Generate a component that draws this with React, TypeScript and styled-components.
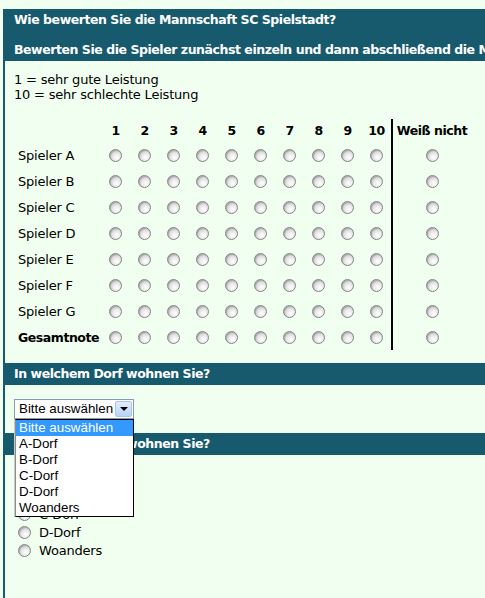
import React from "react";
import styled, { createGlobalStyle, css } from "styled-components";

const TEAL = "#175a6e";
const BG = "#f0fff0";

const boldText = css`
  font-weight: bold;
  font-size: 12.5px;
  letter-spacing: -0.45px;
`;

const GlobalStyle = createGlobalStyle`
  html, body {
    margin: 0;
    padding: 0;
    background: ${BG};
    overflow: hidden;
  }
  body {
    font-family: "DejaVu Sans", Verdana, sans-serif;
    font-size: 13px;
    letter-spacing: -0.2px;
    color: #000;
  }
`;

const Page = styled.div`
  margin: 9px 0 0 3px;
  border-left: 2px solid ${TEAL};
  width: 640px;
  min-height: 589px;
`;

const SectionHeader = styled.div`
  background: ${TEAL};
  color: #fff;
  ${boldText};
  line-height: 16px;
  padding: 3px 9px;
  white-space: nowrap;
`;

const SubLine = styled.div`
  margin-top: 14px;
`;

const Legend = styled.div`
  margin: 11px 0 0 9px;
  line-height: 15px;
`;

const Grid = styled.div`
  margin: 17px 0 0 9px;
  display: grid;
  grid-template-columns: 87px repeat(10, 29px) 80px;
  grid-auto-rows: 26px;
  grid-template-rows: 23px;
  width: max-content;
`;

const HeadCell = styled.div<{ $sep?: boolean }>`
  ${boldText};
  display: flex;
  align-items: center;
  justify-content: center;
  white-space: nowrap;
  ${(p) => (p.$sep ? "border-left: 2px solid #000;" : "")}
`;

const LabelCell = styled.div<{ $bold?: boolean }>`
  display: flex;
  align-items: center;
  padding-left: 4px;
  white-space: nowrap;
  ${(p) => (p.$bold ? boldText : "")}
`;

const RadioCell = styled.div<{ $sep?: boolean }>`
  display: flex;
  align-items: center;
  justify-content: center;
  ${(p) => (p.$sep ? "border-left: 2px solid #000;" : "")}
`;

const Radio = styled.span`
  display: inline-block;
  flex: none;
  box-sizing: border-box;
  width: 13px;
  height: 13px;
  border-radius: 50%;
  border: 1px solid #858585;
  background: radial-gradient(circle at 62% 68%, #ffffff 0%, #efefef 30%, #bdbdbd 92%);
  box-shadow: inset 1px 1px 1px rgba(0, 0, 0, 0.18);
`;

const SelectArea = styled.div`
  position: relative;
  margin: 14px 0 0 9px;
  width: 120px;
  height: 20px;
`;

const SelectBox = styled.div`
  box-sizing: border-box;
  width: 120px;
  height: 20px;
  border: 1px solid #7f9db9;
  background: #fff;
  display: flex;
  align-items: stretch;
  font-family: "Liberation Sans", Arial, sans-serif;
  font-size: 13.33px;
  letter-spacing: 0;
`;

const SelectText = styled.div`
  flex: 1;
  padding-left: 4px;
  line-height: 18px;
  white-space: nowrap;
  overflow: hidden;
`;

const SelectButton = styled.div`
  width: 17px;
  margin: 1px 1px 1px 0;
  box-sizing: border-box;
  border: 1px solid #aac6ec;
  border-radius: 2px;
  background: linear-gradient(#e3eefc, #b9d3f7);
  display: flex;
  align-items: center;
  justify-content: center;
`;

const Arrow = styled.span`
  width: 0;
  height: 0;
  border-left: 4px solid transparent;
  border-right: 4px solid transparent;
  border-top: 4px solid #000;
`;

const DropList = styled.div`
  position: absolute;
  top: 20px;
  left: 1px;
  width: 119px;
  box-sizing: border-box;
  border: 1px solid #000;
  border-left: 1px solid #8c8c8c;
  background: #fff;
  z-index: 5;
  font-family: "Liberation Sans", Arial, sans-serif;
  font-size: 13.33px;
  letter-spacing: 0;
  box-shadow: -1px 0 0 #c8c8c8;
`;

const Option = styled.div<{ $active?: boolean }>`
  height: 16px;
  line-height: 16px;
  padding-left: 3px;
  white-space: nowrap;
  background: ${(p) => (p.$active ? "#3399ff" : "#fff")};
  color: ${(p) => (p.$active ? "#fff" : "#000")};
`;

const Section = styled.div`
  margin-top: 13px;
`;

const Section3 = styled.div`
  margin-top: 14px;
`;

const RadioList = styled.div`
  margin: 14px 0 0 13px;
  display: flex;
  flex-direction: column;
`;

const RadioRow = styled.label`
  display: flex;
  align-items: center;
  gap: 8px;
  height: 18px;
  white-space: nowrap;
`;

const players = ["Spieler A", "Spieler B", "Spieler C", "Spieler D", "Spieler E", "Spieler F", "Spieler G"];
const nums = [1, 2, 3, 4, 5, 6, 7, 8, 9, 10];
const villages = ["A-Dorf", "B-Dorf", "C-Dorf", "D-Dorf", "Woanders"];

export default function App() {
  const rows = [...players.map((p) => ({ label: p, bold: false })), { label: "Gesamtnote", bold: true }];
  return (
    <>
      <GlobalStyle />
      <Page>
        <SectionHeader>
          <div>Wie bewerten Sie die Mannschaft SC Spielstadt?</div>
          <SubLine>Bewerten Sie die Spieler zunächst einzeln und dann abschließend die Mannschaft insgesamt.</SubLine>
        </SectionHeader>
        <Legend>
          <div>1 = sehr gute Leistung</div>
          <div>10 = sehr schlechte Leistung</div>
        </Legend>
        <Grid>
          <HeadCell />
          {nums.map((n) => (
            <HeadCell key={n}>{n}</HeadCell>
          ))}
          <HeadCell $sep>Weiß nicht</HeadCell>
          {rows.map((r) => (
            <React.Fragment key={r.label}>
              <LabelCell $bold={r.bold}>{r.label}</LabelCell>
              {nums.map((n) => (
                <RadioCell key={n}>
                  <Radio />
                </RadioCell>
              ))}
              <RadioCell $sep>
                <Radio />
              </RadioCell>
            </React.Fragment>
          ))}
        </Grid>
        <Section>
          <SectionHeader>In welchem Dorf wohnen Sie?</SectionHeader>
          <SelectArea>
            <SelectBox>
              <SelectText>Bitte auswählen</SelectText>
              <SelectButton>
                <Arrow />
              </SelectButton>
            </SelectBox>
            <DropList>
              <Option $active>Bitte auswählen</Option>
              {villages.map((v) => (
                <Option key={v}>{v}</Option>
              ))}
            </DropList>
          </SelectArea>
        </Section>
        <Section3>
          <SectionHeader>In welchem Dorf wohnen Sie?</SectionHeader>
          <RadioList>
            {villages.map((v) => (
              <RadioRow key={v}>
                <Radio />
                <span>{v}</span>
              </RadioRow>
            ))}
          </RadioList>
        </Section3>
      </Page>
    </>
  );
}
